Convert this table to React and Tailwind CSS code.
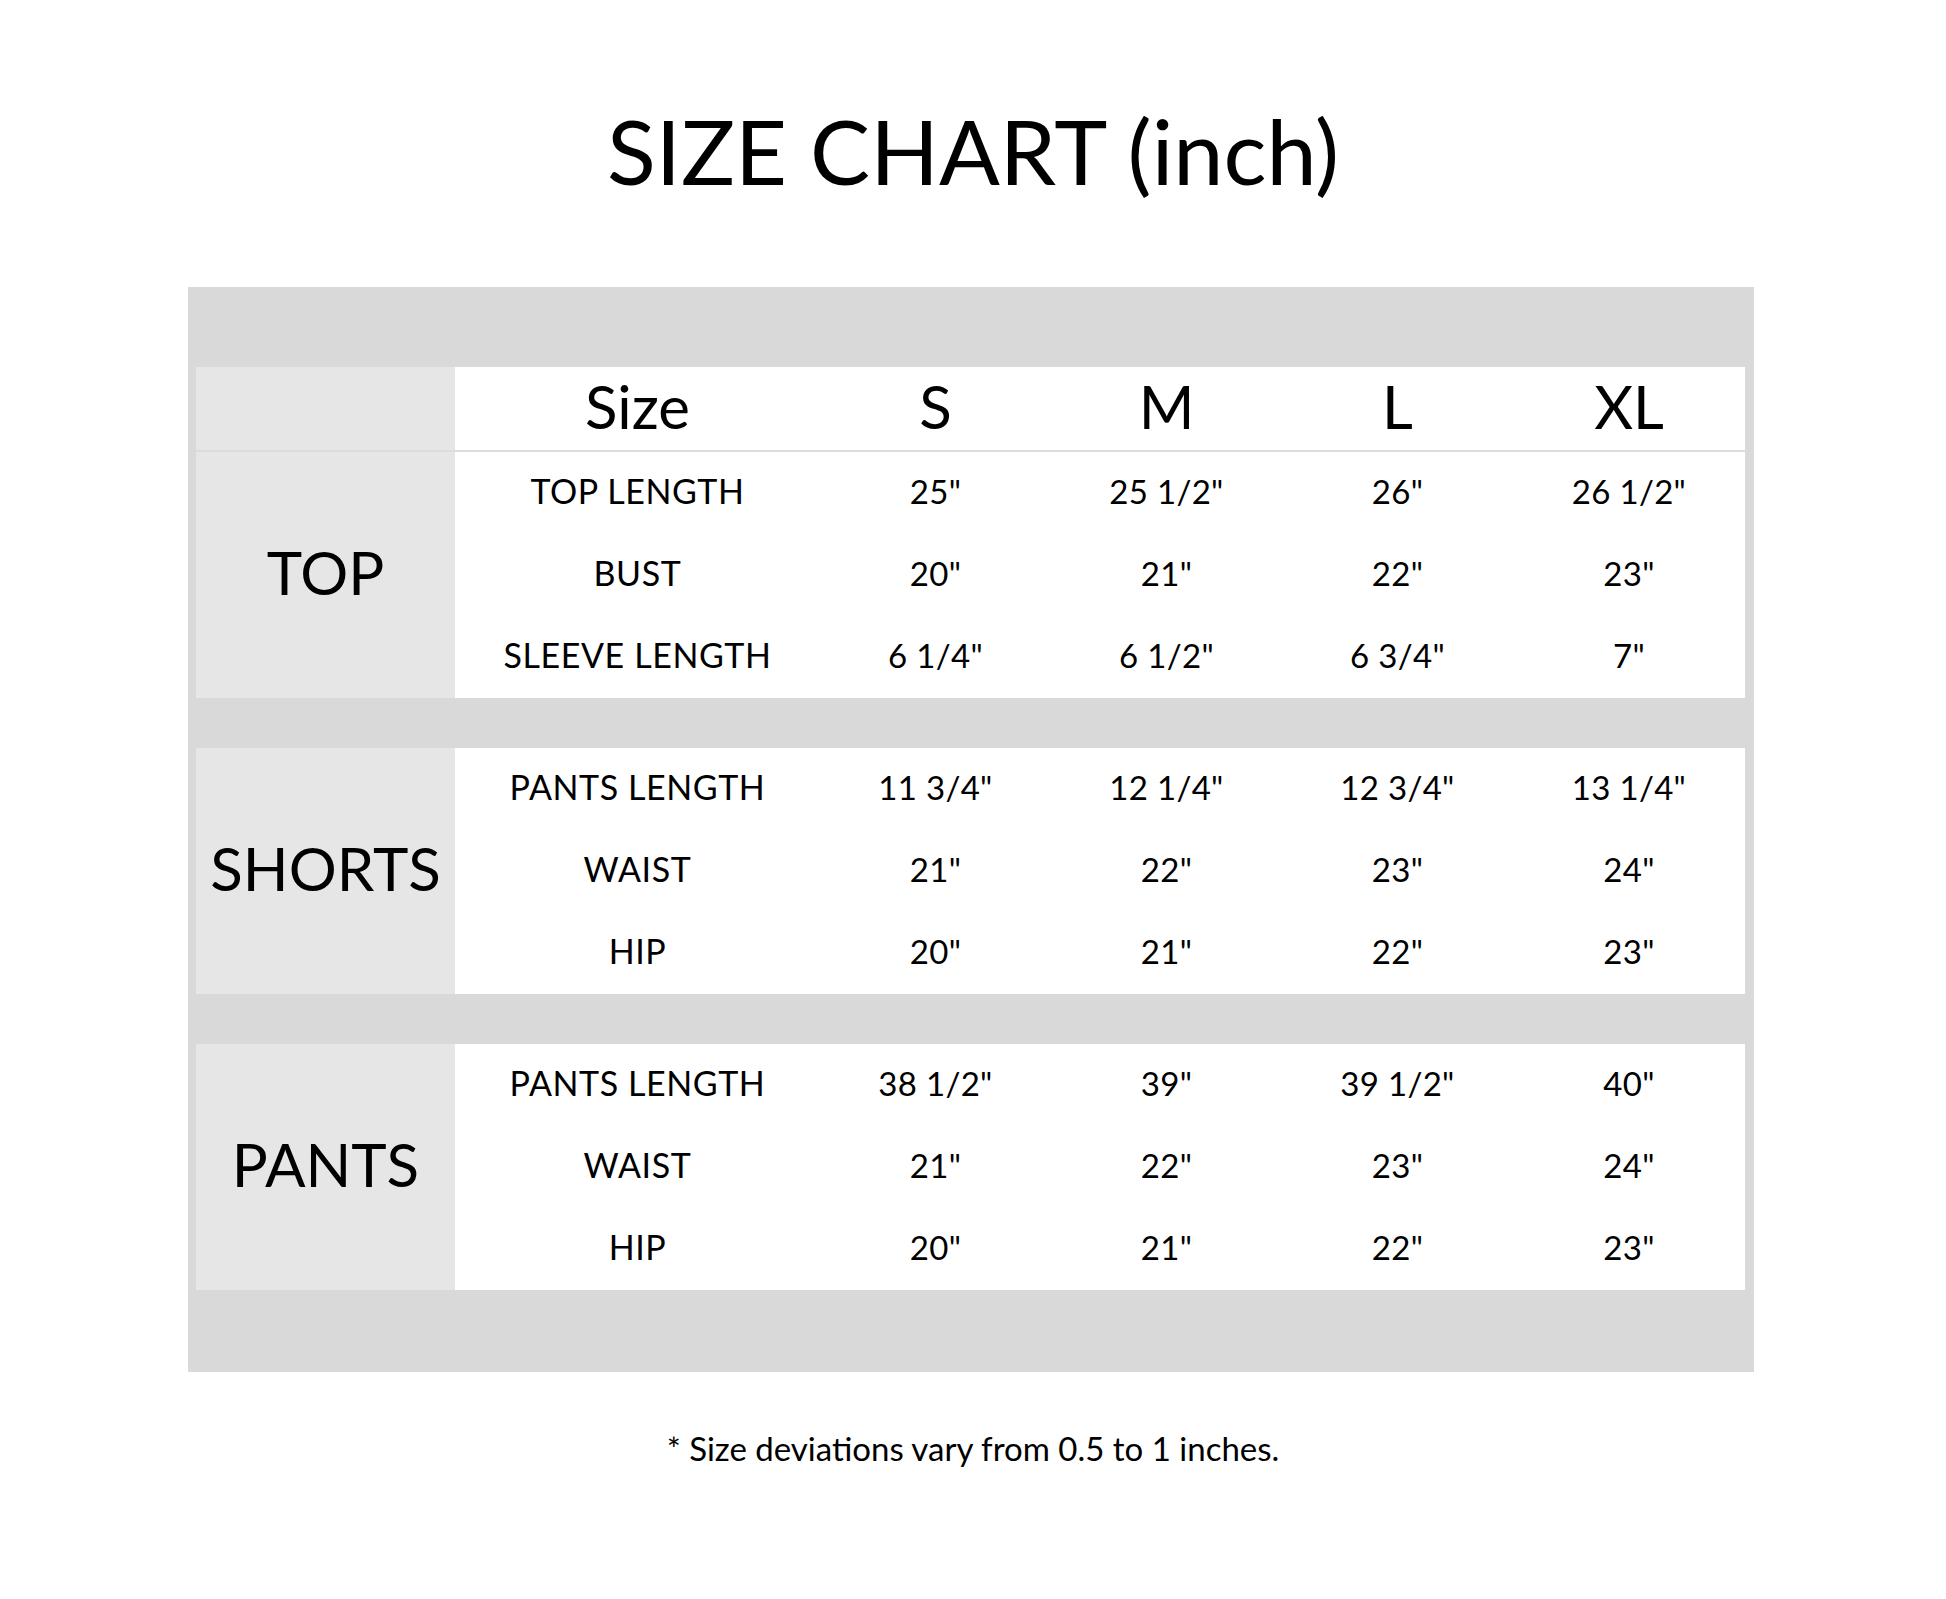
import React from "react";

const sections = [
  {
    name: "TOP",
    rows: [
      ["TOP LENGTH", '25"', '25 1/2"', '26"', '26 1/2"'],
      ["BUST", '20"', '21"', '22"', '23"'],
      ["SLEEVE LENGTH", '6 1/4"', '6 1/2"', '6 3/4"', '7"'],
    ],
  },
  {
    name: "SHORTS",
    rows: [
      ["PANTS LENGTH", '11 3/4"', '12 1/4"', '12 3/4"', '13 1/4"'],
      ["WAIST", '21"', '22"', '23"', '24"'],
      ["HIP", '20"', '21"', '22"', '23"'],
    ],
  },
  {
    name: "PANTS",
    rows: [
      ["PANTS LENGTH", '38 1/2"', '39"', '39 1/2"', '40"'],
      ["WAIST", '21"', '22"', '23"', '24"'],
      ["HIP", '20"', '21"', '22"', '23"'],
    ],
  },
];

const cols = "grid grid-cols-[365px_231px_231px_231px_232px]";

function Section({ section }) {
  return (
    <div className="flex">
      <div className="w-[259px] bg-[#e6e6e6] flex items-center justify-center text-[60px] leading-none pb-[7px]">
        {section.name}
      </div>
      <div className="flex-1 bg-white">
        {section.rows.map((row, i) => (
          <div key={i} className={`${cols} h-[82px] items-center text-[33px] leading-none pb-[4px]`}>
            {row.map((cell, j) => (
              <div
                key={j}
                className={j === 0 ? "text-center text-[34px] tracking-[0.6px]" : "text-center tracking-[0.3px]"}
              >
                {cell}
              </div>
            ))}
          </div>
        ))}
      </div>
    </div>
  );
}

export default function App() {
  return (
    <div className="w-[1946px] h-[1599px] bg-white text-black font-['Lato',sans-serif]">
      <div className="h-[287px] flex items-center justify-center pt-[12px]">
        <h1 className="text-[90px] leading-none">SIZE CHART (inch)</h1>
      </div>

      <div className="ml-[188px] w-[1566px] bg-[#d9d9d9] pt-[80px] pb-[82px] pl-[8px] pr-[9px]">
        {/* header row */}
        <div className="flex border-b-2 border-[#dcdcdc]">
          <div className="w-[259px] h-[83px] bg-[#e6e6e6]" />
          <div className={`flex-1 bg-white h-[83px] ${cols} items-center text-[60px] leading-none pb-[6px]`}>
            {["Size", "S", "M", "L", "XL"].map((h) => (
              <div key={h} className="text-center">
                {h}
              </div>
            ))}
          </div>
        </div>

        <div className="flex flex-col gap-[50px]">
          {sections.map((s) => (
            <Section key={s.name} section={s} />
          ))}
        </div>
      </div>

      <p className="mt-[60px] text-center text-[33px] leading-none">
        * Size deviations vary from 0.5 to 1 inches.
      </p>
    </div>
  );
}
